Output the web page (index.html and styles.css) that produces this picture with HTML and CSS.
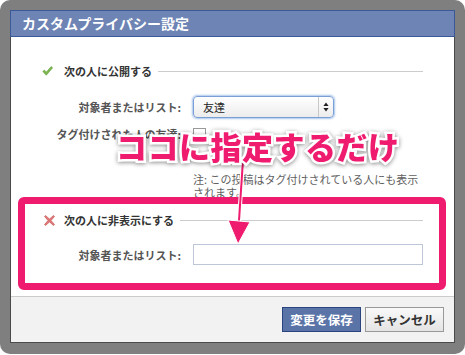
FILE: index.html
```html
<!DOCTYPE html>
<html lang="ja">
<head>
  <meta charset="UTF-8">
  <title>カスタムプライバシー設定</title>
  <link rel="stylesheet" href="styles.css">
</head>
<body>
  <div class="overlay">
    <div class="dialog">
      <div class="dialog-header">カスタムプライバシー設定</div>

      <div class="dialog-body">
        <div class="section-title">
          <svg class="icon" width="11" height="10" viewBox="0 0 11 10">
            <path d="M0.8 5.4 L2.4 4.1 L4.2 6.2 L9.2 0.6 L10.6 1.8 L4.3 9.2 Z" fill="#7cb84e" stroke="#5a9a33" stroke-width="0.6"/>
          </svg>
          <span>次の人に公開する</span>
          <span class="rule"></span>
        </div>

        <div class="field">
          <label>対象者またはリスト:</label>
          <div class="select">
            <span class="select-value">友達</span>
            <span class="select-arrows">
              <svg width="6" height="10" viewBox="0 0 6 10">
                <path d="M3 0.5 L5.6 4 L0.4 4 Z M3 9.5 L5.6 6 L0.4 6 Z" fill="#222"/>
              </svg>
            </span>
          </div>
        </div>

        <div class="field field-text">
          <label>タグ付けされた人の友達:</label>
          <span class="check-box"></span>
        </div>

        <div class="note">注: この投稿はタグ付けされている人にも表示<br>されます。</div>

        <div class="section-title section-hide">
          <svg class="icon" width="11" height="11" viewBox="0 0 11 11">
            <path d="M1.5 0.5 L5.5 4 L9.5 0.5 L10.5 1.5 L7 5.5 L10.5 9.5 L9.5 10.5 L5.5 7 L1.5 10.5 L0.5 9.5 L4 5.5 L0.5 1.5 Z" fill="#e07a7a" stroke="#c24848" stroke-width="0.6"/>
          </svg>
          <span>次の人に非表示にする</span>
          <span class="rule"></span>
        </div>

        <div class="field field-input">
          <label>対象者またはリスト:</label>
          <div class="text-input"></div>
        </div>
      </div>

      <div class="dialog-footer">
        <button class="btn btn-primary">変更を保存</button>
        <button class="btn">キャンセル</button>
      </div>
    </div>

    <!-- annotation layer -->
    <div class="mark-box"></div>
    <svg class="mark-arrow" width="40" height="100" viewBox="0 0 40 100">
      <line x1="23" y1="2" x2="18.5" y2="70" stroke="#fff" stroke-width="4"/>
      <line x1="23" y1="2" x2="18.5" y2="70" stroke="#ef1b6f" stroke-width="2"/>
      <path d="M8 62 L30 64 L18 86 Z" fill="#ef1b6f" stroke="#fff" stroke-width="1"/>
    </svg>
    <div class="mark-text">ココに指定するだけ</div>
  </div>
</body>
</html>
```

FILE: styles.css
```css
body {
  margin: 0;
  background-color: #fff;
  font-family: "Noto Sans CJK JP", "Liberation Sans", sans-serif;
}
.overlay {
  position: relative;
  width: 465px;
  height: 354px;
  box-sizing: border-box;
  padding: 10px 10px 0 10px;
  background-color: #7f7f7f;
  border-radius: 10px;
}
.dialog {
  display: flex;
  flex-direction: column;
  width: 445px;
  height: 333px;
  box-sizing: border-box;
  border: 1px solid #4a4a4a;
  border-top: 0;
  background-color: #fff;
}
.dialog-header {
  margin: 0 -1px;
  height: 25px;
  border: 1px solid #3b5998;
  background-color: #6d84b4;
  color: #fff;
  font-size: 14px;
  font-weight: bold;
  line-height: 25px;
  padding-left: 11px;
}
.dialog-body {
  flex: 1;
  padding: 26px 31px 0 30px;
}
.section-title {
  display: flex;
  align-items: center;
  height: 16px;
  font-size: 11px;
  font-weight: bold;
  color: #333;
}
.section-title .icon {
  margin-left: 1px;
  margin-right: 11px;
}
.section-hide {
  margin-top: 13px;
}
.section-hide .icon {
  margin-left: 3px;
  margin-right: 9px;
}
.rule {
  flex: 1;
  height: 1px;
  margin-left: 6px;
  background-color: #ccc;
}
.field {
  display: flex;
  align-items: center;
  margin-top: 17px;
  height: 22px;
  font-size: 11px;
}
.field label {
  width: 140px;
  margin-right: 12px;
  text-align: right;
  font-weight: bold;
  color: #555;
}
.select {
  display: flex;
  align-items: center;
  width: 139px;
  height: 20px;
  border: 1px solid #7a9fd6;
  border-radius: 4px;
  box-shadow: 0 0 2px 1px #a9c5ec;
  background: linear-gradient(#fff, #ececec);
}
.select-value {
  flex: 1;
  padding-left: 9px;
  color: #222;
}
.select-arrows {
  display: flex;
  align-items: center;
  justify-content: center;
  width: 14px;
  height: 20px;
  border-left: 1px solid #c8c8c8;
}
.field-text {
  margin-top: 8px;
  height: 16px;
}
.field-text label {
  width: 168px;
  margin-left: -28px;
}
.check-box {
  width: 11px;
  height: 11px;
  border: 1px solid #999;
  background-color: #fff;
}
.note {
  margin-top: 31px;
  margin-left: 152px;
  font-size: 11px;
  line-height: 13px;
  color: #5f5f5f;
}
.field-input {
  margin-top: 16px;
  height: 21px;
}
.text-input {
  flex: 1;
  height: 19px;
  border: 1px solid #bdc7d8;
  background-color: #fff;
}
.dialog-footer {
  display: flex;
  justify-content: flex-end;
  gap: 4px;
  height: 35px;
  padding: 10px 10px 0 0;
  border-top: 1px solid #ccc;
  background-color: #f2f2f2;
}
.btn {
  height: 25px;
  width: 79px;
  padding: 0;
  font-family: "Noto Sans CJK JP", sans-serif;
  font-size: 12.5px;
  font-weight: bold;
  color: #333;
  border: 1px solid #999;
  background: linear-gradient(#f9f9f9, #e4e4e4);
}
.btn-primary {
  color: #fff;
  border-color: #29447e;
  background: #5b74a8;
}
.mark-box {
  position: absolute;
  left: 18px;
  top: 197px;
  width: 414px;
  height: 79px;
  border: 7px solid #ef1b6f;
  border-radius: 6px;
}
.mark-arrow {
  position: absolute;
  left: 220px;
  top: 158px;
}
.mark-text {
  position: absolute;
  left: 116px;
  top: 127px;
  font-size: 31px;
  font-weight: 900;
  line-height: 38px;
  letter-spacing: 0.5px;
  color: #ef1b6f;
  -webkit-text-stroke: 5px #fff;
  paint-order: stroke fill;
  filter: drop-shadow(0 1px 2px rgba(0, 0, 0, 0.45));
}
```
